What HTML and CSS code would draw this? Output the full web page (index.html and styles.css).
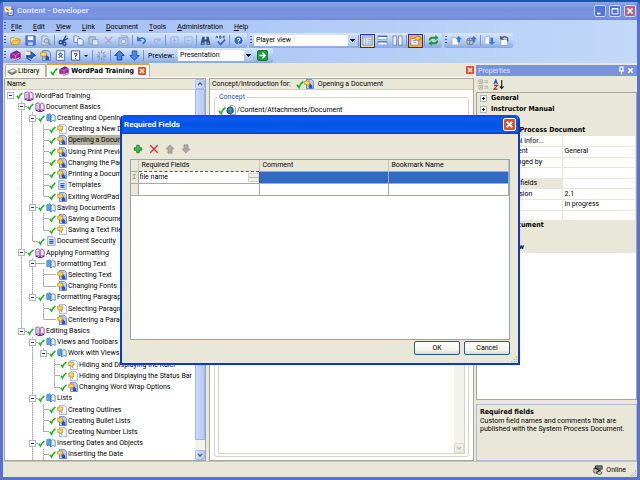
FILE: index.html
```html
<!DOCTYPE html>
<html lang="en">
<head>
    <meta charset="UTF-8">
    <meta name="viewport" content="width=device-width, initial-scale=1.0">
    <title>Content - Developer</title>
    <link rel="stylesheet" href="styles.css">
</head>
<body>
    <!-- Icon library -->
    <svg class="symbols" aria-hidden="true">
        <symbol id="check" viewBox="0 0 12 12"><path d="M1.500 6.500 L4.500 10.500 Q6.500 4.500 11 1.500" fill="none" stroke="#13b81c" stroke-width="2.600"/></symbol>
        <symbol id="book-purple" viewBox="0 0 12 12"><path d="M1 2 L4 1 L6 3 L8 1 L11 3 V10 L8 9 L6 11 L4 9 L1 10Z" fill="#f3e6fa" stroke="#8a35a0"/><path d="M6 3V11M1 10l4 1.500h2L11 10" fill="none" stroke="#6b2485" stroke-width="1.300"/><path d="M3.500 3v5" stroke="#b878cc"/></symbol>
        <symbol id="book-blue" viewBox="0 0 12 12"><path d="M1 2 L5 1 L6 3 L8 2 L11 3 V10 L8 9 L6 11 L4 9 L1 9Z" fill="#eaf4ff" stroke="#3d7fd0"/><path d="M1 2 L5 1 L6 3 V10 L4 8.500 L1 9Z" fill="#5d9de6"/><path d="M6 3V11" stroke="#2a62b0"/></symbol>
        <symbol id="book-closed" viewBox="0 0 12 12"><path d="M1 4 L7 1 L11 3 V9 L6 11 L1 9Z" fill="#a4249a" stroke="#611163"/><path d="M2 9.500 L6 10.500 L10.500 8.500" stroke="#fff" fill="none"/><path d="M1.500 4 L6 6 L11 3M6 6v4" stroke="#d675cf" fill="none"/></symbol>
        <symbol id="topic-blue" viewBox="0 0 12 12"><path d="M3 .5h6l2.500 2.500v8.500H3z" fill="#b9cdf8" stroke="#5a7cc6"/><path d="M6 4l4 4v3H6z" fill="#2b50c8"/><path d="M.8 2.500h6v4h-2l1 3-3-3h-2z" fill="#ffd955" stroke="#b08a2c" stroke-width=".8"/></symbol>
        <symbol id="topic-pale" viewBox="0 0 12 12"><path d="M3 .5h6l2.500 2.500v8.500H3z" fill="#f3f7ff" stroke="#93aad6"/><path d="M.8 2.500h6v4h-2l1 3-3-3h-2z" fill="#ffd955" stroke="#b08a2c" stroke-width=".8"/></symbol>
        <symbol id="page" viewBox="0 0 12 12"><path d="M2 .5h6.500L11 3v8.500H2z" fill="#dfe9ff" stroke="#7f9be0"/><path d="M4 4.500h5M4 6.500h5M4 8.500h5" stroke="#1f4bc4" stroke-width="1.300"/></symbol>
        <symbol id="globe" viewBox="0 0 12 12"><path d="M5 .5h4L11.500 3v8.500H5z" fill="#fff" stroke="#7d95c6"/><circle cx="5" cy="6.500" r="4" fill="#2b6fc8" stroke="#174a8c"/><path d="M3 4l3 0 1 2-3 1zM5 8h2l-1 2z" fill="#45c253"/></symbol>
        <symbol id="app" viewBox="0 0 12 12"><path d="M5 4h6v7.500H5z" fill="#e8efff" stroke="#27468f"/><path d="M1 1h7v6H1z" fill="#ffe16a" stroke="#fff" stroke-width=".6"/><path d="M2.500 3l3 2.500M6.500 8.500h3" stroke="#27468f"/></symbol>
        <symbol id="library" viewBox="0 0 12 12"><path d="M1 6L7 3.500 11.500 5.500 6 8.500z" fill="#e7e7e7" stroke="#666" stroke-width=".7"/><path d="M1 6v2l5 3 5.500-3V5.500L6 8.500z" fill="#777"/></symbol>
        <symbol id="open" viewBox="0 0 12 12"><path d="M1 10V3h4l1 1h4v2" fill="#fff0a8" stroke="#c79a35"/><path d="M1 10.500L3.500 5.500H11.500L9 10.500z" fill="#f8c545" stroke="#b98a24" stroke-width=".8"/></symbol>
        <symbol id="save" viewBox="0 0 12 12"><path d="M1 1h10v10H1z" fill="#5a7de0" stroke="#3d5cb5"/><path d="M3 1.500h6v4H3z" fill="#fff"/><path d="M3.500 8h5v3h-5z" fill="#c5d3f0"/></symbol>
        <symbol id="preview" viewBox="0 0 12 12"><path d="M2 1h5l3 3v7H2z" fill="#d5e0f0" stroke="#8599bb"/><circle cx="7" cy="6.500" r="2.500" fill="#b9cce8" stroke="#7688a8"/><path d="M9 8.500l2.500 2.500" stroke="#7688a8" stroke-width="1.500"/></symbol>
        <symbol id="cut" viewBox="0 0 12 12"><path d="M9 .5L4.500 8M11 3.500L5 7" stroke="#203f88" stroke-width="1.400"/><circle cx="3" cy="8" r="1.800" fill="none" stroke="#203f88" stroke-width="1.400"/><circle cx="7" cy="9.500" r="1.700" fill="none" stroke="#203f88" stroke-width="1.400"/></symbol>
        <symbol id="copy" viewBox="0 0 12 12"><path d="M1 1h4l2 2v5H1z" fill="#eef4ff" stroke="#6887bd"/><path d="M5 4h4l2 2v5H5z" fill="#eef4ff" stroke="#6887bd"/></symbol>
        <symbol id="paste" viewBox="0 0 12 12"><path d="M1 2h7v8H1z" fill="#b2c0d6" stroke="#8a9cb8"/><path d="M5 5h6v6H5z" fill="#dce6f5" stroke="#8a9cb8"/></symbol>
        <symbol id="cross-dim" viewBox="0 0 12 12"><path d="M2 2l8 8M10 2l-8 8" stroke="#b49bc0" stroke-width="1.300"/></symbol>
        <symbol id="camera" viewBox="0 0 12 12"><path d="M1 3h10v8H1z" fill="#b4c8e8" stroke="#8ba0c5"/><circle cx="6" cy="7" r="2.400" fill="#dde8f8" stroke="#8ba0c5"/><path d="M3 1h7v2" stroke="#8ba0c5" fill="none"/></symbol>
        <symbol id="undo" viewBox="0 0 12 12"><path d="M2 2v4h4M2 6C4 2.500 9 2.500 10 5.500Q10.500 8 7 9.500" fill="none" stroke="#3569c8" stroke-width="1.600"/></symbol>
        <symbol id="redo" viewBox="0 0 12 12"><path d="M10 3v3.500H6.500M10 6.500C8 3 4 4 3.500 6Q3.500 8 6 9" fill="none" stroke="#9ab4e0" stroke-width="1.200"/></symbol>
        <symbol id="expand" viewBox="0 0 12 12"><path d="M2 2h8v8H2zM6 4v4M4 6h4" fill="none" stroke="#9bb3dc"/></symbol>
        <symbol id="collapse" viewBox="0 0 12 12"><path d="M2 2h8v8H2zM4 6h4" fill="none" stroke="#9bb3dc"/></symbol>
        <symbol id="find" viewBox="0 0 12 12"><path d="M2.500 2h2.500v3h2V2h2.500l2 8.500H7V7H5v3.500H.5z" fill="#33507f"/><path d="M2 9h2M8 9h2" stroke="#a7bde0"/></symbol>
        <symbol id="spell" viewBox="0 0 12 12"><path d="M1 3.500L2 1l1 2.500M5 1v2.500h1.500V1zM11 1.200H9v2h2" fill="none" stroke="#253e70" stroke-width=".8"/><path d="M3 7l3 3.500L11 5" fill="none" stroke="#3465bd" stroke-width="1.800"/></symbol>
        <symbol id="help" viewBox="0 0 12 12"><circle cx="6" cy="6" r="5" fill="#3669c9" stroke="#dce9ff"/><path d="M4.500 4.500Q6 2.500 7.500 4.500Q7.500 5.500 6 6.500V7.500M6 8.500v1" fill="none" stroke="#fff" stroke-width="1.200"/></symbol>
        <symbol id="pane-full" viewBox="0 0 12 12"><path d="M1 1h10v10H1z" fill="#dfeaff" stroke="#6b8fd0"/><path d="M1 2.500h10M4 3v8M6 5h4M6 7h4M6 9h4" stroke="#8bade6"/></symbol>
        <symbol id="pane-rows" viewBox="0 0 12 12"><path d="M1 1h10v4H1zM1 7h10v4H1z" fill="#fff" stroke="#8ba0c5"/><path d="M1 1.500h10M1 7.500h10" stroke="#4a6fb5" stroke-width="1.300"/></symbol>
        <symbol id="pane-cols" viewBox="0 0 12 12"><path d="M1 1h4v10H1zM7 1h4v10H7z" fill="#eef4ff" stroke="#7189b5"/></symbol>
        <symbol id="props" viewBox="0 0 12 12"><path d="M1 4h8v7H1z" fill="#fff" stroke="#9a8a66"/><path d="M3 6h4M3 8h4" stroke="#7a8fc4"/><path d="M5 4l3-3 3 1v3L8 6z" fill="#f6d15a" stroke="#8f6b22" stroke-width=".8"/></symbol>
        <symbol id="refresh" viewBox="0 0 12 12"><path d="M1 6V4l2-2h5V0l3.500 3L8 6V4H4L2.500 6zM11 6v2l-2 2H4v2L.5 9 4 6v2h4l1.500-2z" fill="#1f9a36"/></symbol>
        <symbol id="doc-up" viewBox="0 0 12 12"><path d="M1 3h7v8H1z" fill="#fff" stroke="#9fb0cc"/><path d="M8.500 1L12 4.500h-2V8H7V4.500H5z" fill="#4379cc"/></symbol>
        <symbol id="globe-up" viewBox="0 0 12 12"><circle cx="4.500" cy="7" r="3.800" fill="#b8c4d4" stroke="#66768f"/><path d="M2 6h5M4 4v6" stroke="#66768f"/><path d="M8.500 1L12 4.500h-2V8H7V4.500H5z" fill="#4b76b8"/></symbol>
        <symbol id="doc-down" viewBox="0 0 12 12"><path d="M1 2l5-1v9H1z" fill="#f5f8ff" stroke="#9fb0cc"/><path d="M8.500 11L12 7.500h-2V3H7v4.500H5z" fill="#4379cc"/></symbol>
        <symbol id="doc-undo" viewBox="0 0 12 12"><path d="M2 5h7v6.500H2z" fill="#fff" stroke="#9fa9bb"/><path d="M2 1v3.500h3M2 4Q6 0 9.500 3.500V7" fill="none" stroke="#555e70" stroke-width="1.500"/></symbol>
        <symbol id="new-section" viewBox="0 0 12 12"><path d="M2 1.500h4L11.500 6 6 11.500 2 9z" fill="#2d59bd" stroke="#15398b"/><path d="M.5 1.500h5.500v4H.5z" fill="#fff0a0"/><path d="M4 9l3 1.500L11 7" fill="none" stroke="#dfe8ff"/></symbol>
        <symbol id="link-page" viewBox="0 0 12 12"><path d="M1.500 .8h9v10.500h-9z" fill="#f2f6ff" stroke="#5d6f92"/><path d="M4 5l2-2 2 2-2 2zM4 8.500l2-2 2 2" fill="none" stroke="#4b7cc4" stroke-width="1.200"/></symbol>
        <symbol id="question" viewBox="0 0 12 12"><path d="M1.500 1h9v10h-9z" fill="#fff" stroke="#334c84"/><path d="M4.500 4.500Q6 2.500 7.500 4.500Q7.500 5.500 6 6.500V7.500M6 8.500v1" fill="none" stroke="#24438d" stroke-width="1.200"/></symbol>
        <symbol id="unlink" viewBox="0 0 12 12"><path d="M1 5.500h3.500M7.500 5.500H11M1 7.500h3.500M7.500 7.500H11M6 .5v3M6 8.500v3M2.500 2l2 2M9.500 2l-2 2M2.500 11l2-2M9.500 11l-2-2" stroke="#8494ad" stroke-width="1.100"/></symbol>
        <symbol id="up" viewBox="0 0 12 12"><path d="M6 .8L11.200 6H8.500v5h-5V6H.8z" fill="#4a87e4" stroke="#1c3f8c"/></symbol>
        <symbol id="down" viewBox="0 0 12 12"><path d="M6 11.200L11.200 6H8.500V1h-5v5H.8z" fill="#4a87e4" stroke="#2a56a8"/></symbol>
        <symbol id="go" viewBox="0 0 12 12"><rect x=".5" y=".5" width="11" height="11" rx="1.500" fill="#249c38" stroke="#12712a"/><path d="M2.500 6h6M6 3l3 3-3 3" fill="none" stroke="#fff" stroke-width="1.600"/></symbol>
        <symbol id="add" viewBox="0 0 12 12"><path d="M4.500 1.500h3v3h3v3h-3v3h-3v-3h-3v-3h3z" fill="#3fbf45" stroke="#14801c"/></symbol>
        <symbol id="delete" viewBox="0 0 12 12"><path d="M1.500 1.500l9 9M10.500 1.500l-9 9" stroke="#d6302a" stroke-width="1.600"/></symbol>
        <symbol id="up-dim" viewBox="0 0 12 12"><path d="M6 1L11 6H8.500v5h-5V6H1z" fill="#aaa9a1" stroke="#8c8b85" stroke-width=".7"/></symbol>
        <symbol id="down-dim" viewBox="0 0 12 12"><path d="M6 11L11 6H8.500V1h-5v5H1z" fill="#aaa9a1" stroke="#8c8b85" stroke-width=".7"/></symbol>
        <symbol id="x" viewBox="0 0 12 12"><path d="M3 3l6 6M9 3l-6 6" stroke="#fff" stroke-width="2"/></symbol>
        <symbol id="min" viewBox="0 0 12 12"><path d="M2.500 9h4" stroke="#fff" stroke-width="2"/></symbol>
        <symbol id="max" viewBox="0 0 12 12"><path d="M2.500 3h7v6.500h-7zM2.500 3.500h7" fill="none" stroke="#fff" stroke-width="1.200"/></symbol>
        <symbol id="pin" viewBox="0 0 12 12"><path d="M4 1.500h4v5H4zM2.500 6.500h7M6 7v4" fill="none" stroke="#fff" stroke-width="1.500"/></symbol>
        <symbol id="chev-up" viewBox="0 0 12 12"><path d="M3 7.500l3-3 3 3" fill="none" stroke="#4d6185" stroke-width="2"/></symbol>
        <symbol id="chev-down" viewBox="0 0 12 12"><path d="M3 4.500l3 3 3-3" fill="none" stroke="currentColor" stroke-width="2"/></symbol>
        <symbol id="cats" viewBox="0 0 12 12"><path d="M1 1h4v4H1zM1 7h4v4H1zM2 3h2M3 2v2M2 9h2M3 8v2M7 2h4M7 4h4M7 8h4M7 10h4" fill="none" stroke="#aaa99c" stroke-width=".9"/></symbol>
        <symbol id="sort" viewBox="0 0 12 12"><path d="M1 5.500L3 .8l2 4.700M1.700 4h2.600" fill="none" stroke="#2d56b5" stroke-width="1.200"/><path d="M1 7h4l-4 4h4" fill="none" stroke="#a0322d" stroke-width="1.200"/><path d="M9.500 1v9M7.500 8l2 2.500 2-2.500" fill="none" stroke="#111" stroke-width="1.200"/></symbol>
        <symbol id="online" viewBox="0 0 12 12"><path d="M3 1h8v4H3z" fill="#777" stroke="#333"/><path d="M1 4l6 1 4 5-3 1.500L1 9z" fill="#c7c09b" stroke="#333" stroke-width=".8"/><path d="M2 3l6 4M4 9l5-3" stroke="#1c1c1c" stroke-width="1.300"/></symbol>
        <symbol id="sizer" viewBox="0 0 12 12"><path d="M9 2h2v2H9zM9 5.500h2v2H9zM9 9h2v2H9zM5.500 5.500h2v2h-2zM5.500 9h2v2h-2zM2 9h2v2H2z" fill="#bdb9a6"/></symbol>
    </svg>

    <div class="window">
        <header class="titlebar">
            <svg class="icon"><use href="#app"/></svg>
            <h1>Content - Developer</h1>
            <button class="win-btn" aria-label="Minimize"><svg><use href="#min"/></svg></button>
            <button class="win-btn" aria-label="Maximize"><svg><use href="#max"/></svg></button>
            <button class="win-btn close-dim" aria-label="Close"><svg><use href="#x"/></svg></button>
        </header>

        <div class="bars">
            <nav class="menubar">
                <span class="grip"></span>
                <a href="#"><u>F</u>ile</a>
                <a href="#"><u>E</u>dit</a>
                <a href="#"><u>V</u>iew</a>
                <a href="#"><u>L</u>ink</a>
                <a href="#"><u>D</u>ocument</a>
                <a href="#"><u>T</u>ools</a>
                <a href="#"><u>A</u>dministration</a>
                <a href="#"><u>H</u>elp</a>
            </nav>

            <div class="toolbar-row">
                <div class="toolbar">
                    <span class="grip"></span>
                    <button class="tool" aria-label="Open"><svg><use href="#open"/></svg></button>
                    <button class="tool" aria-label="Save"><svg><use href="#save"/></svg></button>
                    <button class="tool" aria-label="Print preview"><svg><use href="#preview"/></svg></button>
                    <span class="sep"></span>
                    <button class="tool" aria-label="Cut"><svg><use href="#cut"/></svg></button>
                    <button class="tool" aria-label="Copy"><svg><use href="#copy"/></svg></button>
                    <button class="tool" aria-label="Paste"><svg><use href="#paste"/></svg></button>
                    <button class="tool" aria-label="Delete"><svg><use href="#cross-dim"/></svg></button>
                    <button class="tool" aria-label="Capture"><svg><use href="#camera"/></svg></button>
                    <span class="sep"></span>
                    <button class="tool" aria-label="Undo"><svg><use href="#undo"/></svg></button>
                    <button class="tool" aria-label="Redo"><svg><use href="#redo"/></svg></button>
                    <span class="sep"></span>
                    <button class="tool narrow" aria-label="Expand"><svg><use href="#expand"/></svg></button>
                    <button class="tool narrow" aria-label="Collapse"><svg><use href="#collapse"/></svg></button>
                    <span class="sep"></span>
                    <button class="tool" aria-label="Find"><svg><use href="#find"/></svg></button>
                    <button class="tool" aria-label="Spelling"><svg><use href="#spell"/></svg></button>
                    <span class="sep"></span>
                    <button class="tool" aria-label="Help"><svg><use href="#help"/></svg></button>
                </div>
                <div class="toolbar">
                    <span class="grip"></span>
                    <select class="combo wide" aria-label="View"><option>Player view</option></select>
                    <span class="sep"></span>
                    <button class="tool active" aria-label="Single pane"><svg><use href="#pane-full"/></svg></button>
                    <button class="tool" aria-label="Split rows"><svg><use href="#pane-rows"/></svg></button>
                    <button class="tool" aria-label="Split columns"><svg><use href="#pane-cols"/></svg></button>
                    <span class="sep"></span>
                    <button class="tool active hot" aria-label="Properties"><svg><use href="#props"/></svg></button>
                    <span class="sep"></span>
                    <button class="tool" aria-label="Refresh"><svg><use href="#refresh"/></svg></button>
                </div>
                <div class="toolbar">
                    <span class="grip"></span>
                    <button class="tool" aria-label="Check in"><svg><use href="#doc-up"/></svg></button>
                    <button class="tool" aria-label="Check in all"><svg><use href="#globe-up"/></svg></button>
                    <span class="sep"></span>
                    <button class="tool" aria-label="Check out"><svg><use href="#doc-down"/></svg></button>
                    <button class="tool" aria-label="Cancel check out"><svg><use href="#doc-undo"/></svg></button>
                </div>
            </div>

            <div class="toolbar-row">
                <div class="toolbar">
                    <span class="grip"></span>
                    <button class="tool" aria-label="New module"><svg><use href="#book-closed"/></svg></button>
                    <button class="tool" aria-label="New section"><svg><use href="#new-section"/></svg></button>
                    <button class="tool" aria-label="New topic"><svg><use href="#topic-blue"/></svg></button>
                    <button class="tool" aria-label="New link"><svg><use href="#link-page"/></svg></button>
                    <button class="tool" aria-label="New question"><svg><use href="#question"/></svg></button>
                    <span class="caret"></span>
                    <span class="sep"></span>
                    <button class="tool" aria-label="Unlink"><svg><use href="#unlink"/></svg></button>
                    <span class="sep"></span>
                    <button class="tool" aria-label="Move up"><svg><use href="#up"/></svg></button>
                    <button class="tool" aria-label="Move down"><svg><use href="#down"/></svg></button>
                    <span class="sep"></span>
                    <label class="combo-label" for="preview-type">Preview:</label>
                    <select class="combo" id="preview-type"><option>Presentation</option></select>
                    <button class="tool go" aria-label="Go"><svg><use href="#go"/></svg></button>
                </div>
            </div>
        </div>

        <main class="workspace">
            <section class="documents">
                <div class="tabs">
                    <a class="tab" href="#"><svg class="icon"><use href="#library"/></svg>Library</a>
                    <div class="tab selected">
                        <svg class="tick"><use href="#check"/></svg>
                        <svg class="icon"><use href="#book-closed"/></svg>
                        <b>WordPad Training</b>
                        <button class="red-x" aria-label="Close tab"><svg><use href="#x"/></svg></button>
                    </div>
                    <button class="red-x last" aria-label="Close document"><svg><use href="#x"/></svg></button>
                </div>

                <div class="panes">
                    <div class="outline">
                        <div class="outline-main">
                            <div class="pane-head">Name</div>
                            <ul class="tree" id="tree"></ul>
                        </div>
                        <div class="scrollbar">
                            <span class="scroll-btn"><svg><use href="#chev-up"/></svg></span>
                            <span class="thumb"></span>
                            <span class="scroll-btn"><svg><use href="#chev-down"/></svg></span>
                        </div>
                    </div>

                    <div class="concept">
                        <div class="pane-head">
                            <span>Concept/Introduction for:</span>
                            <svg class="tick"><use href="#check"/></svg>
                            <svg class="icon"><use href="#topic-blue"/></svg>
                            <span class="doc-name">Opening a Document</span>
                        </div>
                        <div class="concept-body">
                            <fieldset>
                                <legend>Concept</legend>
                                <div class="attachment">
                                    <svg class="tick"><use href="#check"/></svg>
                                    <svg class="icon"><use href="#globe"/></svg>
                                    <span>/Content/Attachments/Document</span>
                                </div>
                                <div class="viewer">
                                    <div class="scrollbar disabled">
                                        <span class="scroll-btn"><svg><use href="#chev-down"/></svg></span>
                                    </div>
                                </div>
                            </fieldset>
                        </div>
                    </div>
                </div>
            </section>

            <aside class="properties">
                <div class="prop-title">
                    <span>Properties</span>
                    <svg class="icon"><use href="#pin"/></svg>
                    <svg class="icon"><use href="#x"/></svg>
                </div>
                <div class="prop-tools">
                    <button class="tool" aria-label="Categorized"><svg><use href="#cats"/></svg></button>
                    <button class="tool" aria-label="Alphabetical"><svg><use href="#sort"/></svg></button>
                </div>
                <div class="prop-sheet">
                    <table class="prop-grid">
                        <tr class="cat"><td><i class="box plus"></i></td><th colspan="2">General</th></tr>
                        <tr class="cat"><td><i class="box plus"></i></td><th colspan="2">Instructor Manual</th></tr>
                        <tr class="cat"><td><i class="box plus"></i></td><th colspan="2">Player</th></tr>
                        <tr class="cat"><td><i class="box"></i></td><th colspan="2">System Process Document</th></tr>
                        <tr><td></td><td>Additional infor...</td><td></td></tr>
                        <tr><td></td><td>Department</td><td>General</td></tr>
                        <tr><td></td><td>Last changed by</td><td></td></tr>
                        <tr><td></td><td>Purpose</td><td></td></tr>
                        <tr class="current"><td></td><td>Required fields</td><td></td></tr>
                        <tr><td></td><td>SOP Revision</td><td>2.1</td></tr>
                        <tr><td></td><td>Status</td><td>in progress</td></tr>
                        <tr><td></td><td>Title</td><td></td></tr>
                        <tr class="cat"><td><i class="box plus"></i></td><th colspan="2">Test Document</th></tr>
                        <tr class="cat"><td><i class="box plus"></i></td><th colspan="2">Topic</th></tr>
                        <tr class="cat"><td><i class="box plus"></i></td><th colspan="2">Workflow</th></tr>
                    </table>
                </div>
                <div class="prop-help">
                    <b>Required fields</b>
                    <p>Custom field names and comments that are published with the System Process Document.</p>
                </div>
            </aside>
        </main>

        <footer class="statusbar">
            <svg class="icon"><use href="#online"/></svg>
            <span>Online</span>
            <svg class="sizer"><use href="#sizer"/></svg>
        </footer>
    </div>

    <div class="overlay">
        <div class="dialog" role="dialog" aria-labelledby="dialog-title">
            <div class="dialog-title">
                <h2 id="dialog-title">Required Fields</h2>
                <button class="red-x big" aria-label="Close"><svg><use href="#x"/></svg></button>
            </div>
            <div class="dialog-body">
                <div class="dialog-tools">
                    <button class="tool" aria-label="Add"><svg><use href="#add"/></svg></button>
                    <button class="tool" aria-label="Delete"><svg><use href="#delete"/></svg></button>
                    <button class="tool" aria-label="Move up" disabled><svg><use href="#up-dim"/></svg></button>
                    <button class="tool" aria-label="Move down" disabled><svg><use href="#down-dim"/></svg></button>
                </div>
                <div class="grid-box">
                    <table class="fields">
                        <thead>
                            <tr><th class="marker"></th><th>Required Fields</th><th>Comment</th><th>Bookmark Name</th></tr>
                        </thead>
                        <tbody>
                            <tr class="selected">
                                <td class="marker">&#x2336;</td>
                                <td class="editing">
                                    <div class="editor">
                                        <input type="text" value="file name" aria-label="Required field">
                                        <span class="spin"></span>
                                    </div>
                                </td>
                                <td></td>
                                <td></td>
                            </tr>
                            <tr><td class="marker"></td><td></td><td></td><td></td></tr>
                        </tbody>
                    </table>
                </div>
                <div class="dialog-actions">
                    <button class="button">OK</button>
                    <button class="button">Cancel</button>
                </div>
                <svg class="sizer"><use href="#sizer"/></svg>
            </div>
        </div>
    </div>

    <script src="tree.js"></script>
</body>
</html>
```

FILE: styles.css
```css
* {
    margin: 0;
    padding: 0;
    box-sizing: border-box;
}

body {
    font-family: Roboto, 'Liberation Sans', sans-serif;
    font-size: 7px;
    line-height: 10px;
    color: #000;
    background: #0f56a8;
    height: 100vh;
    overflow: hidden;
    position: relative;
}

b, th {
    font-family: 'DejaVu Sans Condensed', 'DejaVu Sans', sans-serif;
}

button, input, select {
    font: inherit;
    color: inherit;
    border: none;
    background: none;
}

a {
    color: inherit;
    text-decoration: none;
}

svg {
    display: block;
    flex: none;
}

.symbols {
    position: absolute;
    width: 0;
    height: 0;
}

.icon {
    width: 10px;
    height: 10px;
}

.tick {
    width: 8px;
    height: 9px;
}

/* Main window */
.window {
    height: 100vh;
    display: flex;
    flex-direction: column;
    border: 3px solid #5a70d6;
    border-top: 2px solid #1a56ac;
    border-radius: 6px 6px 0 0;
    background: #e9e8d8;
}

.titlebar {
    height: 18px;
    flex: none;
    display: flex;
    align-items: center;
    gap: 3px;
    padding: 0 1px;
    background: linear-gradient(#8ba3ec, #7790dc 40%, #7c95e0 80%, #6f88d6);
}

.titlebar h1 {
    flex: 1;
    font-size: 8px;
    color: #dbe4fa;
}

.win-btn {
    width: 12px;
    height: 12px;
    border: 1px solid #c9d5fa;
    border-radius: 2px;
    background: #5272dd;
}

.win-btn svg {
    width: 10px;
    height: 10px;
}

.win-btn.close-dim {
    background: #b5657e;
}

/* Menus and toolbars */
.bars {
    flex: none;
    background: linear-gradient(90deg, #9fbcf2, #afc9f6 40%, #c1d8f8);
}

.menubar {
    height: 13px;
    display: flex;
    align-items: center;
    gap: 11px;
    padding-left: 1px;
}

.menubar .grip {
    margin-right: -6px;
}

.toolbar-row {
    display: flex;
    gap: 2px;
    height: 15px;
}

.toolbar {
    display: flex;
    align-items: center;
    height: 15px;
    padding: 0 1px;
    border-radius: 2px;
    background: linear-gradient(#d9e7fc, #b9d0f6 50%, #86a8e2);
}

.grip {
    width: 2px;
    height: 9px;
    margin-right: 2px;
    background: repeating-linear-gradient(#43629f 0 1px, transparent 1px 3px);
}

.tool {
    width: 15px;
    height: 14px;
    display: flex;
    align-items: center;
    justify-content: center;
}

.tool svg {
    width: 11px;
    height: 11px;
}

.tool.narrow {
    width: 14px;
}

.tool.active {
    background: #fdd08c;
    border: 1px solid #20398c;
}

.tool.hot {
    background: #f9a548;
}

.tool.go {
    width: 19px;
}

.sep {
    width: 1px;
    height: 11px;
    margin: 0 1px;
    background: #7395d6;
}

.caret {
    margin: 0 3px 0 1px;
    border: 2px solid transparent;
    border-top-color: #111;
    border-bottom: none;
}

.combo {
    appearance: none;
    width: 75px;
    height: 11px;
    line-height: 11px;
    padding-left: 2px;
    background: linear-gradient(#111, #111) right 2px top 4px / 5px 1px no-repeat,
        linear-gradient(#111, #111) right 3px top 5px / 3px 1px no-repeat,
        linear-gradient(#111, #111) right 4px top 6px / 1px 1px no-repeat,
        linear-gradient(#c9dcfa, #b0c8f2) right / 9px 11px no-repeat,
        #fff;
}

.combo.wide {
    width: 103px;
}

.combo-label {
    width: 33px;
    padding-left: 3px;
}

/* Workspace */
.workspace {
    flex: 1;
    min-height: 0;
    display: flex;
    gap: 2px;
}

.documents {
    flex: 1;
    min-width: 0;
    display: flex;
    flex-direction: column;
}

.tabs {
    height: 15px;
    flex: none;
    display: flex;
    align-items: flex-end;
    padding-left: 2px;
    border-bottom: 1px solid #fff;
}

.tab {
    height: 13px;
    display: flex;
    align-items: center;
    gap: 1px;
    padding: 0 6px 0 1px;
    background: #f5f4ea;
    border: 1px solid #b5b3a2;
    border-bottom: none;
    border-radius: 2px 2px 0 0;
}

.tab.selected {
    height: 14px;
    padding: 0 3px;
    background: #fff;
    border-top: 2px solid #f5a02c;
}

.tab.selected b {
    padding: 0 3px 0 1px;
}

.red-x {
    width: 8px;
    height: 8px;
    border-radius: 1px;
    background: #e2512f;
}

.red-x svg {
    width: 8px;
    height: 8px;
}

.red-x.last {
    margin: 0 0 3px auto;
}

.red-x.big {
    width: 13px;
    height: 13px;
    display: flex;
    align-items: center;
    justify-content: center;
    border: 1px solid #fff;
    border-radius: 2px;
}

.red-x.big svg {
    width: 11px;
    height: 11px;
}

.panes {
    flex: 1;
    min-height: 0;
    display: flex;
    gap: 3px;
    padding-left: 1px;
}

.outline {
    width: 202px;
    flex: none;
    display: flex;
    border: 1px solid #a3a79c;
    background: #fff;
}

.outline-main {
    flex: 1;
    display: flex;
    flex-direction: column;
    min-width: 0;
}

.pane-head {
    height: 11px;
    flex: none;
    display: flex;
    align-items: center;
    padding-left: 2px;
    background: #e9e8d8;
    border-bottom: 1px solid #d0cebd;
}

.tree {
    flex: 1;
    min-height: 0;
    display: grid;
    grid-auto-rows: 1fr;
    list-style: none;
}

.node {
    display: flex;
    align-items: center;
    min-height: 0;
    white-space: nowrap;
}

.guide {
    width: 11px;
    align-self: stretch;
    flex: none;
    display: flex;
    align-items: center;
    justify-content: center;
}

/* vertical line, full or half height, and the branch to the right */
.guide.pass {
    background: repeating-linear-gradient(#aaa 0 1px, #ccc 1px 2px) 5px 0 / 1px 100% no-repeat;
}

.guide.tee {
    background: repeating-linear-gradient(#aaa 0 1px, #ccc 1px 2px) 5px 0 / 1px 100% no-repeat,
        linear-gradient(#aaa, #aaa) right center / 5px 1px no-repeat;
}

.guide.end {
    background: linear-gradient(#aaa, #aaa) 5px 0 / 1px 50% no-repeat,
        linear-gradient(#aaa, #aaa) right center / 5px 1px no-repeat;
}

.box {
    width: 5px;
    height: 5px;
    margin: 0 auto;
    display: block;
    background: linear-gradient(#333, #333) center / 3px 1px no-repeat, #fff;
    outline: 1px solid #a9b7cc;
    outline-offset: -1px;
}

.guide .box {
    width: 7px;
    height: 7px;
    margin: 0;
}

.node .tick {
    width: 7px;
}

.no-tick {
    width: 7px;
    height: 1px;
    background: #aaa;
}

.node .icon {
    margin: 0 1px;
}

.node-label.selected {
    background: #b4b09c;
    padding-right: 8px;
}

.scrollbar {
    width: 10px;
    flex: none;
    display: flex;
    flex-direction: column;
    background: #f3f3ec;
}

.scroll-btn {
    height: 10px;
    flex: none;
    background: linear-gradient(90deg, #d4e0fd, #b4c8f6);
    border: 1px solid #a9bdf0;
    border-radius: 1px;
    color: #4d6185;
}

.scroll-btn svg {
    width: 8px;
    height: 8px;
}

.thumb {
    flex: 1;
    margin-bottom: 10px;
    background: linear-gradient(90deg, #c9d8fd, #b6caf8);
    border: 1px solid #9fb5ee;
}

.concept {
    flex: 1;
    min-width: 0;
    display: flex;
    flex-direction: column;
    border: 1px solid #a3a79c;
    background: #fff;
}

.concept .pane-head .tick {
    margin-left: 5px;
}

.doc-name {
    margin-left: 4px;
}

.concept-body {
    flex: 1;
    display: flex;
    padding: 2px 4px 3px;
}

fieldset {
    flex: 1;
    min-width: 0;
    display: flex;
    flex-direction: column;
    padding: 3px 3px 2px;
    border: 1px solid #d5d3c4;
    border-radius: 3px;
}

legend {
    margin-left: -1px;
    padding: 0 2px;
    color: #1c4fd0;
}

.attachment {
    display: flex;
    align-items: center;
    padding-bottom: 4px;
}

.attachment span {
    margin-left: 1px;
}

.viewer {
    flex: 1;
    display: flex;
    justify-content: flex-end;
    border: 1px solid #d5d3c4;
}

.scrollbar.disabled {
    justify-content: flex-end;
}

.disabled .scroll-btn {
    background: #efeee5;
    border-color: #dddbd0;
    color: #c0bfb4;
}

/* Properties panel */
.properties {
    width: 161px;
    flex: none;
    display: flex;
    flex-direction: column;
    padding-top: 2px;
}

.prop-title {
    height: 11px;
    flex: none;
    display: flex;
    align-items: center;
    padding: 0 2px;
    background: #7a92dc;
    color: #dbe4fa;
}

.prop-title span {
    flex: 1;
}

.prop-title .icon {
    width: 9px;
    height: 9px;
}

.prop-tools {
    height: 16px;
    flex: none;
    display: flex;
    align-items: center;
}

.prop-sheet {
    flex: 1;
    min-height: 0;
    border: 1px solid #a7a798;
    background: #fff;
}

.prop-grid {
    width: 100%;
    height: 160px;
    border-collapse: collapse;
    table-layout: fixed;
}

.prop-grid tr {
    line-height: 9px;
}

.prop-grid td, .prop-grid th {
    border: 1px solid #e9e8d8;
    padding-left: 2px;
    text-align: left;
    white-space: nowrap;
    overflow: hidden;
}

.prop-grid td:first-child {
    width: 11px;
    padding: 0;
    background: #e9e8d8;
}

.prop-grid td:nth-child(2) {
    width: 60px;
}

.prop-grid .cat, .prop-grid .current td:nth-child(2) {
    background: #e9e8d8;
}

.box.plus {
    background: linear-gradient(#111, #111) center / 3px 1px no-repeat,
        linear-gradient(#111, #111) center / 1px 3px no-repeat,
        #fff;
    outline-offset: 0;
}

.prop-help {
    height: 57px;
    flex: none;
    margin-top: 4px;
    padding: 2px 3px;
    border: 1px solid #a9bcd2;
    line-height: 8px;
}

.prop-help b {
    display: block;
    line-height: 10px;
}

.statusbar {
    height: 16px;
    flex: none;
    display: flex;
    align-items: center;
    justify-content: flex-end;
    gap: 3px;
    border-top: 1px solid #c5c3b2;
}

.sizer {
    width: 8px;
    height: 8px;
    align-self: flex-end;
}

/* Dialog */
.overlay {
    position: absolute;
    inset: 0;
    display: flex;
    align-items: center;
    justify-content: center;
}

.dialog {
    width: 400px;
    height: 250px;
    display: flex;
    flex-direction: column;
    border: 2px solid #0a38d6;
    border-top: none;
    border-radius: 5px 5px 0 0;
    background: #e9e8d8;
    overflow: hidden;
}

.dialog-title {
    height: 19px;
    flex: none;
    display: flex;
    align-items: center;
    justify-content: space-between;
    padding: 0 2px;
    background: linear-gradient(#0a4be0, #0a5cf0 20%, #0453e2 50%, #0560f5 85%, #0340c0);
}

.dialog-title h2 {
    font-size: 8px;
    color: #fff;
}

.dialog-body {
    flex: 1;
    display: flex;
    flex-direction: column;
    padding: 8px 0 0 8px;
}

.dialog-tools {
    display: flex;
    gap: 1px;
    padding-bottom: 3px;
}

.dialog-tools .tool svg {
    width: 10px;
    height: 10px;
}

.grid-box {
    flex: 1;
    margin-right: 8px;
    border: 1px solid #8ca6c4;
    background: #fff;
}

.fields {
    width: 100%;
    border-collapse: collapse;
    table-layout: fixed;
}

.fields th {
    height: 11px;
    padding-left: 3px;
    font-family: inherit;
    font-weight: normal;
    text-align: left;
    background: #e9e8d8;
    border-right: 1px solid #c6c4b3;
}

.fields td {
    height: 12px;
    border: 1px solid #a9a99d;
    border-left: none;
}

.fields .marker {
    width: 7px;
    padding: 0;
    text-align: center;
    background: #e9e8d8;
}

.fields th:nth-child(2) {
    width: 121px;
}

.fields th:nth-child(3) {
    width: 129px;
}

.fields .selected td {
    background: #316ac5;
}

.fields .selected .marker {
    background: #e9e8d8;
}

.fields .selected .editing {
    background: #fff;
    border: 1px dashed #555;
}

.editor {
    display: flex;
    align-items: center;
}

.editor input {
    flex: 1;
    min-width: 0;
    height: 10px;
    padding-left: 1px;
}

.spin {
    width: 11px;
    height: 9px;
    border: 1px solid #d6d5ca;
    background: linear-gradient(#bbb, #bbb) center / 9px 1px no-repeat, #f0efe6;
}

.dialog-actions {
    display: flex;
    justify-content: flex-end;
    gap: 4px;
    padding: 1px 8px 0 0;
}

.button {
    width: 46px;
    height: 14px;
    border: 1px solid #2d5a8c;
    border-radius: 2px;
    background: linear-gradient(#fff, #f3f2ea 70%, #dcd8c8);
}
```

FILE: tree.js
```js
// level, icon, label, flags: "-" = expandable, "n" = not checked, "s" = selected
const nodes = [
    [0, 'book-purple', 'WordPad Training', '-'],
    [1, 'book-purple', 'Document Basics', '-'],
    [2, 'book-blue', 'Creating and Opening Documents', '-'],
    [3, 'topic-pale', 'Creating a New Document', ''],
    [3, 'topic-blue', 'Opening a Document', 's'],
    [3, 'topic-blue', 'Using Print Preview', ''],
    [3, 'topic-blue', 'Changing the Page Setup', ''],
    [3, 'topic-blue', 'Printing a Document', ''],
    [3, 'page', 'Templates', ''],
    [3, 'topic-blue', 'Exiting WordPad', ''],
    [2, 'book-blue', 'Saving Documents', '-'],
    [3, 'topic-blue', 'Saving a Document', ''],
    [3, 'topic-pale', 'Saving a Text File', ''],
    [2, 'page', 'Document Security', ''],
    [1, 'book-purple', 'Applying Formatting', '-'],
    [2, 'book-blue', 'Formatting Text', '-n'],
    [3, 'topic-blue', 'Selecting Text', 'n'],
    [3, 'topic-blue', 'Changing Fonts', 'n'],
    [2, 'book-blue', 'Formatting Paragraphs', '-'],
    [3, 'topic-pale', 'Selecting Paragraphs', ''],
    [3, 'topic-blue', 'Centering a Paragraph', 'n'],
    [1, 'book-purple', 'Editing Basics', '-'],
    [2, 'book-blue', 'Views and Toolbars', '-'],
    [3, 'book-blue', 'Work with Views', '-'],
    [4, 'topic-pale', 'Hiding and Displaying the Ruler', ''],
    [4, 'topic-pale', 'Hiding and Displaying the Status Bar', ''],
    [4, 'topic-blue', 'Changing Word Wrap Options', ''],
    [2, 'book-blue', 'Lists', '-'],
    [3, 'topic-pale', 'Creating Outlines', ''],
    [3, 'topic-blue', 'Creating Bullet Lists', ''],
    [3, 'topic-pale', 'Creating Number Lists', ''],
    [2, 'book-blue', 'Inserting Dates and Objects', '-'],
    [3, 'topic-blue', 'Inserting the Date', '']
];

// A deeper item never closes a level, only an item above it does
function hasNext(index, level) {
    for (let i = index + 1; i < nodes.length; i++) {
        if (nodes[i][0] === level) return true;
        if (nodes[i][0] < level) return false;
    }
    // levels 2 and 3 go on below the visible part of the list
    return level === 2 || level === 3;
}

document.getElementById('tree').innerHTML = nodes.map(([level, icon, label, flags], index) => {
    let html = '';
    for (let l = 0; l < level; l++) {
        html += `<span class="guide ${l > 0 && hasNext(index, l) ? 'pass' : ''}"></span>`;
    }
    const line = level === 0 ? '' : hasNext(index, level) ? 'tee' : 'end';
    html += `<span class="guide ${line}">${flags.includes('-') ? '<i class="box"></i>' : ''}</span>`;
    html += flags.includes('n') ? '<span class="no-tick"></span>' : '<svg class="tick"><use href="#check"/></svg>';
    html += `<svg class="icon"><use href="#${icon}"/></svg>`;
    html += `<span class="node-label ${flags.includes('s') ? 'selected' : ''}">${label}</span>`;
    return `<li class="node">${html}</li>`;
}).join('');
```
